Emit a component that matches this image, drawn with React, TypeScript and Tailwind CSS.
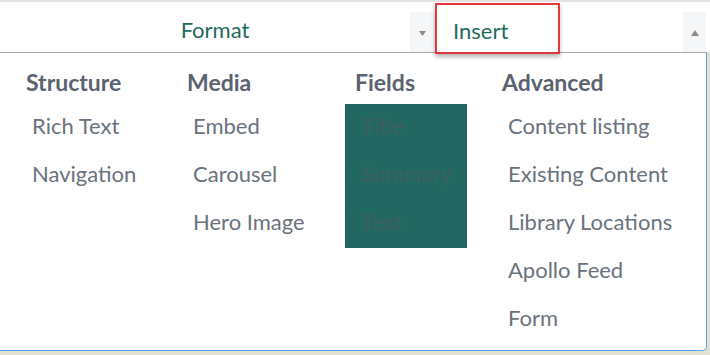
import React from 'react';

const columns = [
  { title: 'Structure', width: 'w-[161px]', items: ['Rich Text', 'Navigation'] },
  { title: 'Media', width: 'w-[168px]', items: ['Embed', 'Carousel', 'Hero Image'] },
  { title: 'Fields', width: 'w-[147px]', items: ['Title', 'Summary', 'Text'], active: true },
  {
    title: 'Advanced',
    width: 'w-[200px]',
    items: ['Content listing', 'Existing Content', 'Library Locations', 'Apollo Feed', 'Form'],
  },
];

const App: React.FC = () => {
  return (
    <div className="w-[710px] h-[355px] overflow-hidden bg-[#e2e2d2] font-['Lato','Noto_Sans',sans-serif]">
      <div className="h-[2px] bg-[#e4e4e4]" />

      {/* Toolbar */}
      <div className="flex items-end h-[50px] bg-white">
        <div className="w-[410px] self-stretch flex items-center justify-center pl-[20px] pt-[4px] text-[22px] text-[#1f6a62]">
          Format
        </div>
        <div className="w-[25px] h-[40px] bg-[#f5f6f8] flex items-center justify-center pt-[2px]">
          <svg width="7" height="5" viewBox="0 0 7 5">
            <path d="M0 0 L7 0 L3.5 5 Z" fill="#8b8b8b" />
          </svg>
        </div>
        <div className="relative w-[125px] h-[51px] self-start mt-[1px] border-2 border-[#e3393e] bg-white shadow-[0_3px_4px_rgba(0,0,0,0.28)] flex items-center pl-[16px] pt-[3px] text-[22px] text-[#1f6a62] z-10">
          Insert
        </div>
        <div className="flex-1" />
        <div className="w-[23px] h-[40px] bg-[#f5f6f8] rounded-tr-[4px] flex items-center justify-center pt-[1px]">
          <svg width="8" height="6" viewBox="0 0 8 6">
            <path d="M4 0 L8 6 L0 6 Z" fill="#8b8b8b" />
          </svg>
        </div>
        <div className="w-[4px]" />
      </div>

      {/* Dropdown panel */}
      <div className="w-[707px] h-[299px] bg-white border-t border-t-[#a9a9a9] border-r border-b border-r-[#5a9cf6] border-b-[#5a9cf6] rounded-br-[5px] flex pt-[15px] pl-[16px]">
        {columns.map((col) => (
          <div key={col.title} className={`${col.width} flex flex-col`}>
            <div className="h-[28px] leading-[28px] pl-[10px] text-[23px] font-bold text-[#5b6270]">
              {col.title}
            </div>
            <div className={`mt-[8px] ${col.active ? 'w-[122px] bg-[#226761]' : ''}`}>
              {col.items.map((item) => (
                <div
                  key={item}
                  className={`h-[48px] leading-[44px] pl-[16px] text-[22px] whitespace-nowrap ${
                    col.active ? 'text-[#3e605e]' : 'text-[#6a727e]'
                  }`}
                >
                  {item}
                </div>
              ))}
            </div>
          </div>
        ))}
      </div>
    </div>
  );
};

export default App;
